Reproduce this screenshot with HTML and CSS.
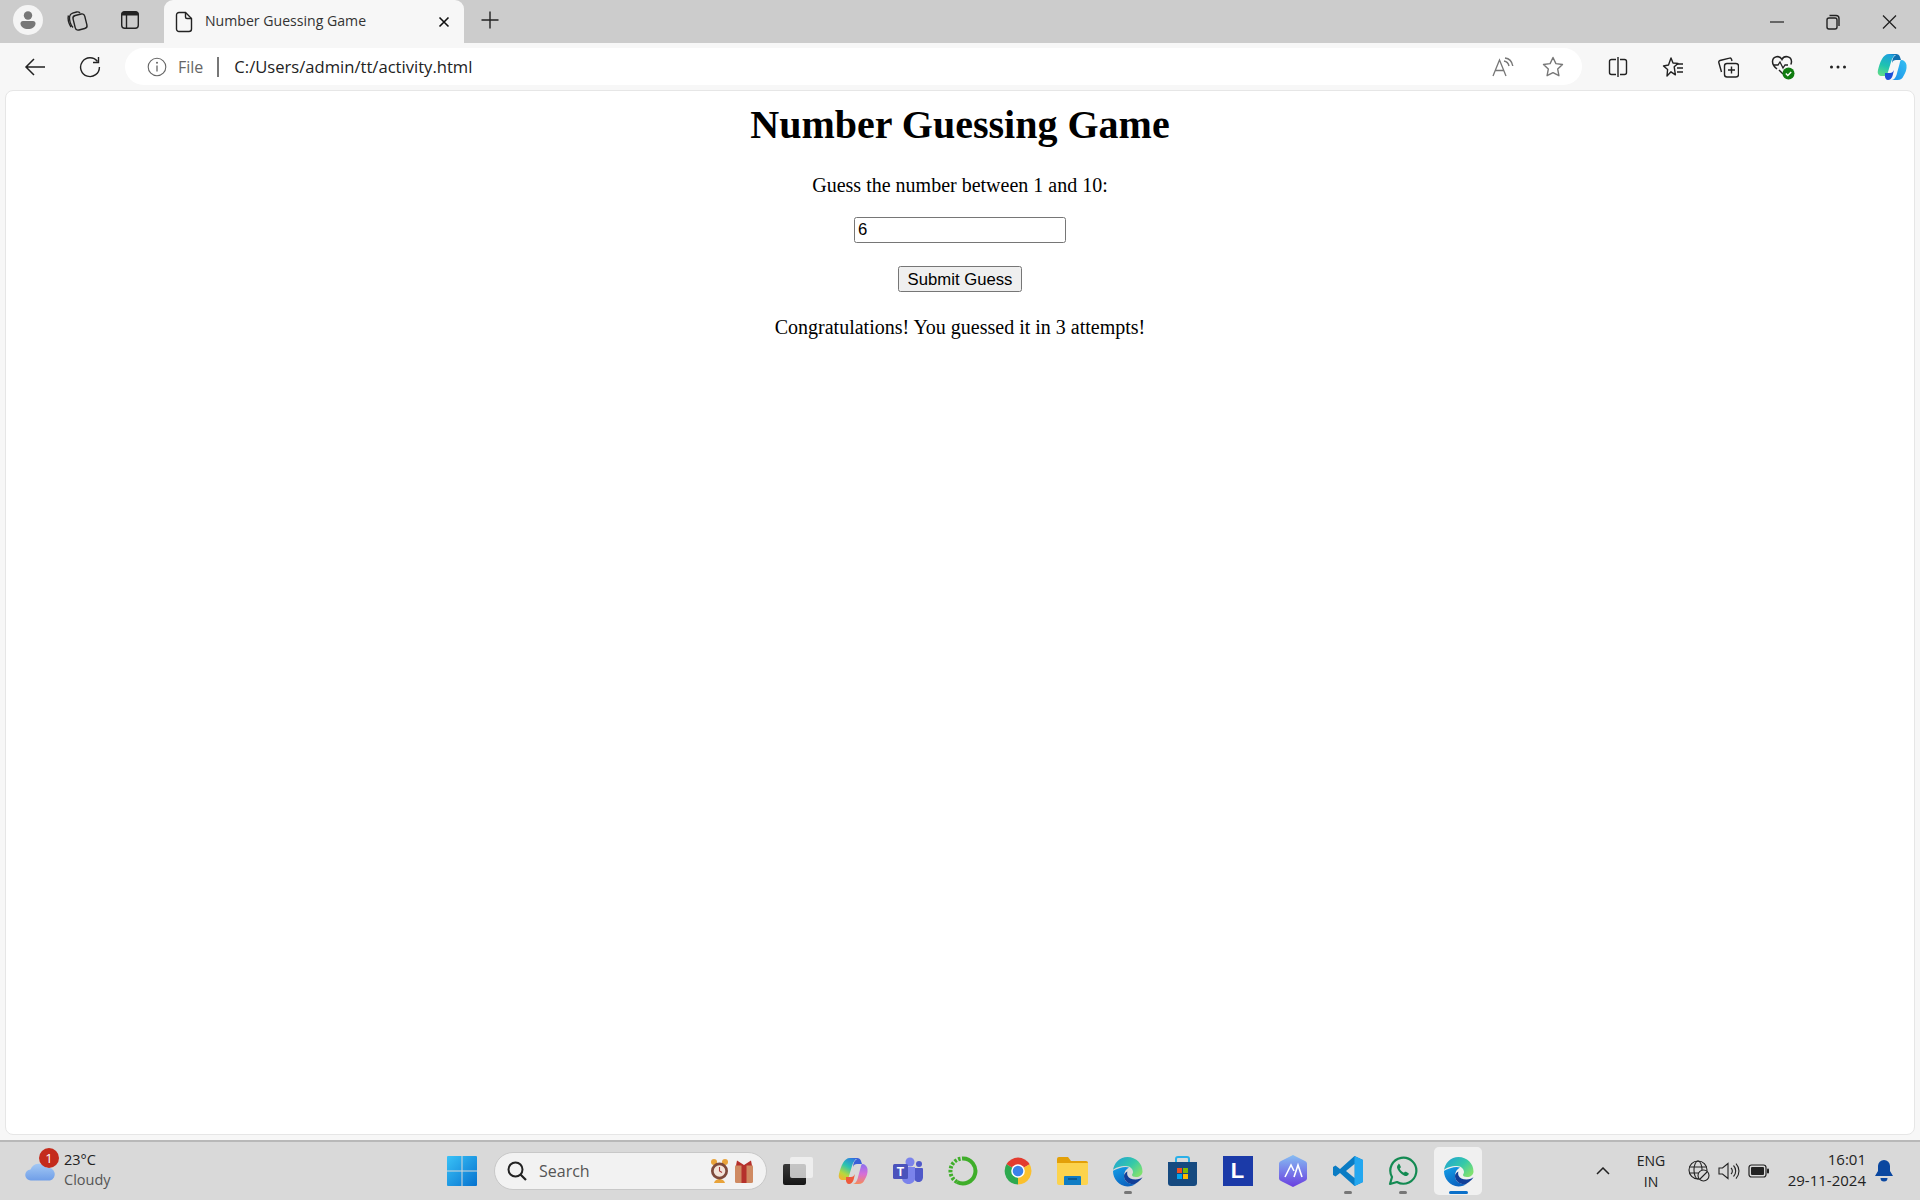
FILE: index.html
```html
<!DOCTYPE html>
<html lang="en">
<head>
    <meta charset="UTF-8">
    <title>Number Guessing Game</title>
    <link rel="stylesheet" href="styles.css">
</head>
<body>
    <div class="tabbar">
        <div class="avatar">
            <svg width="22" height="22" viewBox="0 0 22 22"><circle cx="11" cy="6.500" r="4.200" fill="#777"/><path d="M3.500 14.500a2.500 2.500 0 0 1 2.500-2.500h10a2.500 2.500 0 0 1 2.500 2.500c0 3.500-3.500 5.500-7.500 5.500s-7.500-2-7.500-5.500z" fill="#777"/></svg>
        </div>
        <div class="tab-btn collections-btn">
            <svg class="ic" width="24" height="24" viewBox="0 0 24 24"><rect x="9" y="6.500" width="12" height="15" rx="3" transform="rotate(-14 15 14)"/><path d="M8 19.500C5.500 17 4 12 4.600 8.500c.3-1.600 1.500-2.800 3-3.300l4-1.200c1.400-.4 2.600 0 3.400 1"/><path d="M6 19c-2-3-3.400-8-2.600-11.500"/></svg>
        </div>
        <div class="tab-btn vtabs-btn">
            <svg width="20" height="20" viewBox="0 0 20 20"><rect x="1.700" y="1.700" width="16.600" height="16.600" rx="3" fill="none" stroke="#222" stroke-width="1.400"/><path d="M2 5V4a2 2 0 0 1 2-2h12a2 2 0 0 1 2 2v1z" fill="#222" stroke="#222"/><path d="M6.500 5v13" stroke="#222" stroke-width="1.400"/></svg>
        </div>
        <div class="tab">
            <svg class="ic" width="18" height="22" viewBox="0 0 18 22"><path d="M4 1.500h6.500l6 6V18a2.500 2.500 0 0 1-2.500 2.500H4A2.500 2.500 0 0 1 1.500 18V4A2.500 2.500 0 0 1 4 1.500z"/><path d="M10.500 1.500V6a1.500 1.500 0 0 0 1.500 1.500h4.500"/></svg>
            <span class="tab-title">Number Guessing Game</span>
            <svg class="tab-close" width="12" height="12" viewBox="0 0 12 12"><path d="M1.500 1.500l9 9M10.500 1.500l-9 9" stroke="#111" stroke-width="1.600"/></svg>
        </div>
        <div class="tab-btn new-tab">
            <svg width="20" height="20" viewBox="0 0 20 20"><path d="M10 1.500v17M1.500 10h17" stroke="#222" stroke-width="1.400"/></svg>
        </div>
        <div class="win-controls">
            <svg width="57" height="22" viewBox="0 0 57 22"><path d="M22 11h14" stroke="#222" stroke-width="1.200"/></svg>
            <svg class="ic" width="57" height="22" viewBox="0 0 57 22"><rect x="22" y="7" width="10" height="11" rx="2"/><path d="M24.500 4.500h6.500a3 3 0 0 1 3 3v7.500"/></svg>
            <svg width="57" height="22" viewBox="0 0 57 22"><path d="M21 4.500l13 13M34 4.500l-13 13" stroke="#222" stroke-width="1.300"/></svg>
        </div>
    </div>

    <div class="toolbar">
        <div class="nav-btn back-btn">
            <svg width="22" height="20" viewBox="0 0 22 20"><path d="M21 10H2M10 2l-8 8 8 8" fill="none" stroke="#222" stroke-width="1.500"/></svg>
        </div>
        <div class="nav-btn reload-btn">
            <svg class="ic" width="22" height="22" viewBox="0 0 22 22"><path d="M18.500 5.500A9.400 9.400 0 1 0 20.400 11"/><path d="M19.500 1v5.500H14"/></svg>
        </div>
        <div class="address">
            <svg class="info" width="20" height="20" viewBox="0 0 20 20"><circle cx="10" cy="10" r="8.800" fill="none" stroke="#666" stroke-width="1.100"/><path d="M10 8.500v6" stroke="#666" stroke-width="1.300"/><circle cx="10" cy="5.800" r="1" fill="#666"/></svg>
            <span class="file-label">File</span>
            <span class="addr-divider"></span>
            <span class="url">C:/Users/admin/tt/activity.html</span>
            <svg class="read-aloud" width="22" height="20" viewBox="0 0 22 20"><path d="M1 19L7.500 3 14 19M3.500 13.500h8" fill="none" stroke="#777" stroke-width="1.300"/><path d="M12 4c2.500.5 4.500 2.500 5 5M13 1c4 .5 7 3.500 7.800 8" fill="none" stroke="#777" stroke-width="1.400"/></svg>
            <svg class="fav-star" width="22" height="21" viewBox="0 0 22 21"><path d="M11 1.500l2.900 6.100 6.600.9-4.800 4.600 1.200 6.600L11 16.600l-5.900 3.100 1.200-6.600L1.500 8.500l6.600-.9z" fill="none" stroke="#777" stroke-width="1.400" stroke-linejoin="round"/></svg>
        </div>
        <div class="tools">
            <div class="tool">
                <svg class="ic" width="20" height="20" viewBox="0 0 20 20"><path d="M8 2.500H3.500a2 2 0 0 0-2 2v11a2 2 0 0 0 2 2H8M12 2.500h4.500a2 2 0 0 1 2 2v11a2 2 0 0 1-2 2H12"/><path d="M10 0v20"/></svg>
            </div>
            <div class="tool">
                <svg class="ic" width="22" height="22" viewBox="0 0 22 22"><path d="M9 2l2 5 5 .4-3.800 3.400 1.200 8L9 15.800 5 20l.6-6.500L1.500 10l5-1z" stroke-linejoin="round"/><path d="M14 8h7M15 12h6M15 16h6"/></svg>
            </div>
            <div class="tool">
                <svg class="ic" width="22" height="22" viewBox="0 0 22 22"><rect x="7.500" y="7.500" width="14" height="13.500" rx="2.500"/><path d="M14.500 10.500v7M11 14h7"/><path d="M15 5l-.5-1.800c-.3-.8-1.200-1.300-2-1L3 4.500c-1 .3-1.500 1.200-1.200 2L4.500 16"/></svg>
            </div>
            <div class="tool health-tool">
                <svg width="24" height="26" viewBox="0 0 24 26"><path d="M6 15C3.500 13 1.500 10.500 1.500 7.500A5 5 0 0 1 11 5.500 5 5 0 0 1 20.500 7.500c0 1-.2 2-.7 3" fill="none" stroke="#222" stroke-width="1.500"/><path d="M3 11h4l2-3 3 6 2-3h3" fill="none" stroke="#222" stroke-width="1.300"/><path d="M8 16l4 4" stroke="#222" stroke-width="1.500"/><circle cx="17.500" cy="19.500" r="6" fill="#107c10"/><path d="M14.800 19.500l2 2 3.400-3.600" fill="none" stroke="#fff" stroke-width="1.400"/></svg>
            </div>
            <div class="tool">
                <svg width="18" height="4" viewBox="0 0 18 4"><circle cx="2.500" cy="2" r="1.500" fill="#222"/><circle cx="9" cy="2" r="1.500" fill="#222"/><circle cx="15.500" cy="2" r="1.500" fill="#222"/></svg>
            </div>
            <div class="tool copilot-tool">
                <svg width="32" height="28" viewBox="0 0 30 28">
                    <defs>
                        <linearGradient id="copA" x1="0.600" y1="0" x2="0.300" y2="1"><stop offset="0" stop-color="#1d9fe0"/><stop offset=".55" stop-color="#1fc3b0"/><stop offset="1" stop-color="#5edb8a"/></linearGradient>
                        <linearGradient id="copB" x1="0" y1="1" x2="1" y2="0"><stop offset="0" stop-color="#1c8fe8"/><stop offset="1" stop-color="#35c0f2"/></linearGradient>
                    </defs>
                    <path d="M12 1h8c-3 1-5 4-6 8l-3 10c-.5 2-1 3-2 4H5c-3 0-5-2-4-6 1-4 2-8 4-11 1.500-3 4-5 7-5z" fill="url(#copA)"/>
                    <path d="M12 1h7c2 0 3.500 1 4 3l1 3h-5c-2 0-3.500 1-4 3 .5-4 1-6 4-8z" fill="#0f6fb0"/>
                    <path d="M24 7c3 0 5 2 5.500 5 .5 4-1 8-3 11-1 2.500-3 4-6 4h-6c2 0 4-2 5-5l3-11c.4-1.500.6-3 1.500-4z" fill="url(#copB)"/>
                    <path d="M8 20h5c2 0 3-1 4-3l-1.500 6c-1 2.500-2.500 4-4.500 4-2 0-2.500-1.500-3-3z" fill="#1c4fd8"/>
                </svg>
            </div>
        </div>
    </div>

    <div class="page-wrap">
        <main class="page">
            <h1 class="title">Number Guessing Game</h1>
            <p class="prompt">Guess the number between 1 and 10:</p>
            <input class="guess-input" type="text" value="6">
            <button class="guess-btn">Submit Guess</button>
            <p class="result">Congratulations! You guessed it in 3 attempts!</p>
        </main>
    </div>

    <footer class="taskbar">
        <div class="weather">
            <div class="weather-icon">
                <svg width="31" height="20" viewBox="0 0 31 20"><defs><linearGradient id="cloud" x1="0" y1="0" x2="0" y2="1"><stop offset="0" stop-color="#a3c8f4"/><stop offset="1" stop-color="#6f9ee8"/></linearGradient></defs><path d="M6 19.500a5.500 5.500 0 0 1-.5-11A9 9 0 0 1 21.500 7 6.300 6.300 0 0 1 25 19.500z" fill="url(#cloud)"/></svg>
                <span class="badge">1</span>
            </div>
            <div class="weather-text">
                <span class="temp">23°C</span>
                <span class="cond">Cloudy</span>
            </div>
        </div>
        <div class="task-cell">
            <svg width="30" height="30" viewBox="0 0 30 30"><defs><linearGradient id="win" x1="0" y1="0" x2="1" y2="1"><stop offset="0" stop-color="#39c2f7"/><stop offset="1" stop-color="#0672cf"/></linearGradient></defs><path d="M1 0h13.500v14.500H0V1a1 1 0 0 1 1-1zM15.500 0H29a1 1 0 0 1 1 1v13.500H15.500zM0 15.500h14.500V30H1a1 1 0 0 1-1-1zM15.500 15.500H30V29a1 1 0 0 1-1 1H15.500z" fill="url(#win)"/></svg>
        </div>
        <div class="search">
            <svg width="22" height="22" viewBox="0 0 22 22"><circle cx="9.500" cy="9.500" r="7" fill="none" stroke="#222" stroke-width="2"/><path d="M14.500 14.500l5.500 5.500" stroke="#222" stroke-width="2.200"/></svg>
            <span class="search-text">Search</span>
            <svg class="search-art" width="46" height="28" viewBox="0 0 46 28">
                <circle cx="4" cy="5" r="3" fill="#e8a33a"/><circle cx="15" cy="5" r="3" fill="#e8a33a"/>
                <path d="M4 26c1-3 3-4 5.500-4s4.500 1 5.500 4z" fill="#e8a33a"/>
                <circle cx="9.500" cy="14" r="8.500" fill="#7e4a3c"/><circle cx="9.500" cy="14" r="5.800" fill="#f2e4da"/><path d="M9.500 10v4l2.500 1.500" fill="none" stroke="#a83a3a" stroke-width="1.100"/>
                <rect x="25" y="8" width="18" height="18" rx="1.500" fill="#cf8a62"/><rect x="31.500" y="8" width="5" height="18" fill="#b5312c"/><path d="M27 3.500l7 4.500 7-4.500 1 5H26z" fill="#b5312c"/>
            </svg>
        </div>
        <div class="task-cell">
            <svg width="30" height="30" viewBox="0 0 30 30"><defs><linearGradient id="tv" x1="0" y1="0" x2="0" y2="1"><stop offset="0" stop-color="#3a3a3a"/><stop offset="1" stop-color="#161616"/></linearGradient></defs><rect x="0" y="8" width="23" height="21" rx="2" fill="url(#tv)"/><rect x="7" y="1" width="23" height="21" rx="2" fill="#f4f4f4" fill-opacity=".75"/></svg>
        </div>
        <div class="task-cell">
            <svg width="30" height="28" viewBox="0 0 30 28">
                <defs>
                    <linearGradient id="cplA" x1="0.700" y1="0" x2="0.200" y2="1"><stop offset="0" stop-color="#2b7de0"/><stop offset=".4" stop-color="#2cc4b0"/><stop offset=".75" stop-color="#b8d83c"/><stop offset="1" stop-color="#f5b030"/></linearGradient>
                    <linearGradient id="cplB" x1="0.500" y1="0" x2="0.500" y2="1"><stop offset="0" stop-color="#8a6ff0"/><stop offset=".5" stop-color="#d66fd8"/><stop offset="1" stop-color="#f58a5a"/></linearGradient>
                </defs>
                <path d="M12 1h8c-3 1-5 4-6 8l-3 10c-.5 2-1 3-2 4H5c-3 0-5-2-4-6 1-4 2-8 4-11 1.500-3 4-5 7-5z" fill="url(#cplA)"/>
                <path d="M12 1h7c2 0 3.500 1 4 3l1 3h-5c-2 0-3.500 1-4 3 .5-4 1-6 4-8z" fill="#3a5fd8"/>
                <path d="M24 7c3 0 5 2 5.500 5 .5 4-1 8-3 11-1 2.500-3 4-6 4h-6c2 0 4-2 5-5l3-11c.4-1.500.6-3 1.500-4z" fill="url(#cplB)"/>
                <path d="M8 20h5c2 0 3-1 4-3l-1.500 6c-1 2.500-2.500 4-4.500 4-2 0-2.500-1.500-3-3z" fill="#ee5a3c"/>
            </svg>
        </div>
        <div class="task-cell">
            <svg width="30" height="28" viewBox="0 0 30 28"><circle cx="17" cy="5" r="4.500" fill="#7b83eb"/><circle cx="26" cy="7" r="3" fill="#5059c9"/><path d="M21 11h8a1 1 0 0 1 1 1v8c0 3-2 5-4.500 5S21 23 21 20z" fill="#5059c9"/><path d="M9 10h13v11c0 3.500-3 6-6.500 6S9 24.500 9 21z" fill="#7b83eb"/><rect x="0" y="7" width="15" height="15" rx="1.500" fill="#4b53bc"/><text class="teams-t" x="7.500" y="19">T</text></svg>
        </div>
        <div class="task-cell">
            <svg width="30" height="30" viewBox="0 0 30 30"><path d="M15 2.500a12.500 12.500 0 1 1-6 23.500" fill="none" stroke="#3fae2a" stroke-width="4"/><path d="M9 26A12.500 12.500 0 0 1 15 2.500" fill="none" stroke="#3fae2a" stroke-width="4" stroke-dasharray="2.500 1.500"/></svg>
        </div>
        <div class="task-cell">
            <svg width="30" height="30" viewBox="0 0 30 30"><path d="M15 15L3.400 8.300A13.500 13.500 0 0 1 26.700 8.300z" fill="#e33b2e"/><path d="M15 15L26.700 8.300A13.500 13.500 0 0 1 15 28.500z" fill="#fbc02d"/><path d="M15 15v13.500A13.500 13.500 0 0 1 3.400 8.300z" fill="#2da94f"/><circle cx="15" cy="15" r="6.800" fill="#fff"/><circle cx="15" cy="15" r="5.300" fill="#3b82e8"/></svg>
        </div>
        <div class="task-cell">
            <svg width="31" height="28" viewBox="0 0 31 28"><path d="M0 2a2 2 0 0 1 2-2h9l3 4h15a2 2 0 0 1 2 2v6H0z" fill="#e3a008"/><path d="M0 6h31v20a2 2 0 0 1-2 2H2a2 2 0 0 1-2-2z" fill="#fcd34d"/><path d="M8 19h15a1 1 0 0 1 1 1v8H7v-8a1 1 0 0 1 1-1z" fill="#0f7cc4"/><path d="M11 22h9" stroke="#0b4f80" stroke-width="1.500"/></svg>
        </div>
        <div class="task-cell pinned">
            <svg width="31" height="31" viewBox="0 0 31 31">
                <defs>
                    <linearGradient id="edgeTop" x1="0" y1="0" x2="1" y2="0.700"><stop offset="0" stop-color="#1f9fd8"/><stop offset=".6" stop-color="#35c9a8"/><stop offset="1" stop-color="#7fe070"/></linearGradient>
                    <linearGradient id="edgeBody" x1="0" y1="0" x2="0.500" y2="1"><stop offset="0" stop-color="#14a0e8"/><stop offset="1" stop-color="#0b63c0"/></linearGradient>
                </defs>
                <path d="M1 15C1.500 7 8 1 15.500 1 24 1 30.500 7.500 30.500 15.500c0 3.500-3 5.500-6.500 5.500-2.500 0-4-1-4-2 0-.8 1-1.200 1-3 0-3-3-6-7-6-6 0-11 2-13 4z" fill="url(#edgeTop)"/>
                <path d="M1 15c0 8 6 15 14.500 15.500 3.500 0 6-1 8-2.500-6 1-11.500-2.500-11.500-8 0-4 2-7 5-8.500-3-1-6-.5-9 .5-3 1-6 2-7 3z" fill="url(#edgeBody)"/>
                <path d="M12 20c0 5 5 9 11 8l3-2c2-1.500 3.500-3 4.500-5-1 1.500-4 2.500-7 2.500-4 0-7-1.500-8-4-.5-1.500-.5-3 0-4-2 1-3.500 2.500-3.500 4.500z" fill="#123f98"/>
            </svg>
        </div>
        <div class="task-cell">
            <svg width="29" height="32" viewBox="0 0 29 32"><path d="M8 8V4a2 2 0 0 1 2-2h9a2 2 0 0 1 2 2v4" fill="none" stroke="#2bb0e8" stroke-width="2"/><path d="M0 7h29v21a3 3 0 0 1-3 3H3a3 3 0 0 1-3-3z" fill="#164a80"/><rect x="9" y="13" width="5" height="5" fill="#f25022"/><rect x="15" y="13" width="5" height="5" fill="#7fba00"/><rect x="9" y="19" width="5" height="5" fill="#00a4ef"/><rect x="15" y="19" width="5" height="5" fill="#ffb900"/></svg>
        </div>
        <div class="task-cell">
            <div class="letter-tile">L</div>
        </div>
        <div class="task-cell">
            <svg width="28" height="32" viewBox="0 0 28 32"><defs><linearGradient id="hexa" x1="0" y1="0" x2="0" y2="1"><stop offset="0" stop-color="#86bdf2"/><stop offset="1" stop-color="#6a3fe0"/></linearGradient></defs><path d="M14 0l12 6a3 3 0 0 1 2 3v14a3 3 0 0 1-2 3l-12 6-12-6a3 3 0 0 1-2-3V9a3 3 0 0 1 2-3z" fill="url(#hexa)"/><path d="M6 22l6-12 3 6M15 22l4-12 4 12" fill="none" stroke="#fff" stroke-width="1.600"/></svg>
        </div>
        <div class="task-cell pinned">
            <svg width="30" height="30" viewBox="0 0 30 30"><path d="M21.500 0L30 4v22l-8.500 4L7 17l-4.500 3.500L0 19v-8l2.500-1.500L7 13z" fill="#0a7cc4"/><path d="M21.500 0L30 4v22l-8.500 4z" fill="#23a7f0"/><path d="M21.500 8l-8.500 7 8.500 7z" fill="#d9d9d9"/></svg>
        </div>
        <div class="task-cell pinned">
            <svg width="30" height="30" viewBox="0 0 30 30"><path d="M2 28l2-7A13 13 0 1 1 9 26z" fill="none" stroke="#138a52" stroke-width="2.200" stroke-linejoin="round"/><path d="M10.500 8.500c-1.500 1-2 2.500-1 4.500 1.500 3 3.500 5 6.500 6.500 2 1 3.500.5 4.500-1 .5-.8.3-1.300-.3-1.600l-2.200-1.100c-.6-.3-1-.2-1.400.3l-.6.7c-2-.8-3.500-2.300-4.300-4.300l.7-.6c.5-.4.6-.8.3-1.400l-1.100-2.200c-.3-.6-1-.8-1.600-.3z" fill="#138a52"/></svg>
        </div>
        <div class="task-cell active">
            <svg width="31" height="31" viewBox="0 0 31 31">
                <path d="M1 15C1.500 7 8 1 15.500 1 24 1 30.500 7.500 30.500 15.500c0 3.500-3 5.500-6.500 5.500-2.500 0-4-1-4-2 0-.8 1-1.200 1-3 0-3-3-6-7-6-6 0-11 2-13 4z" fill="url(#edgeTop)"/>
                <path d="M1 15c0 8 6 15 14.500 15.500 3.500 0 6-1 8-2.500-6 1-11.500-2.500-11.500-8 0-4 2-7 5-8.500-3-1-6-.5-9 .5-3 1-6 2-7 3z" fill="url(#edgeBody)"/>
                <path d="M12 20c0 5 5 9 11 8l3-2c2-1.500 3.500-3 4.500-5-1 1.500-4 2.500-7 2.500-4 0-7-1.500-8-4-.5-1.500-.5-3 0-4-2 1-3.500 2.500-3.500 4.500z" fill="#123f98"/>
            </svg>
        </div>
        <div class="tray">
            <svg class="tray-chevron" width="14" height="8" viewBox="0 0 14 8"><path d="M1 7l6-6 6 6" fill="none" stroke="#222" stroke-width="1.500"/></svg>
            <div class="lang"><span>ENG</span><span>IN</span></div>
            <svg class="tray-icon globe" width="22" height="22" viewBox="0 0 22 22"><g fill="none" stroke="#222" stroke-width="1.100"><circle cx="10" cy="10" r="9"/><ellipse cx="10" cy="10" rx="4" ry="9"/><path d="M1 7h18M1 13h18"/></g><circle cx="15.500" cy="15.500" r="5.500" fill="#d9d9d9" stroke="#222" stroke-width="1.100"/><path d="M12 19l7-7" stroke="#222" stroke-width="1.100"/></svg>
            <svg class="tray-icon" width="22" height="20" viewBox="0 0 22 20"><g fill="none" stroke="#222" stroke-width="1.100"><path d="M1 7v6h3.500L10 17.500v-15L4.500 7z"/><path d="M13 7a4 4 0 0 1 0 6M15.500 4.500a8 8 0 0 1 0 11M18 2.500a11 11 0 0 1 0 15"/></g></svg>
            <svg class="tray-icon" width="22" height="14" viewBox="0 0 22 14"><rect x="1" y="1" width="17" height="12" rx="2.500" fill="none" stroke="#222" stroke-width="1.200"/><rect x="3" y="3" width="13" height="8" rx="1" fill="#222"/><rect x="19" y="4.500" width="2" height="5" rx="1" fill="#222"/></svg>
            <div class="clock"><span>16:01</span><span>29-11-2024</span></div>
            <svg class="bell" width="18" height="22" viewBox="0 0 18 22"><path d="M9 0a6 6 0 0 1 6 6v5l3 5H0l3-5V6a6 6 0 0 1 6-6z" fill="#0a47a0"/><path d="M5.500 18h7a3.500 3.500 0 0 1-7 0z" fill="#0a47a0"/></svg>
        </div>
    </footer>
</body>
</html>
```

FILE: styles.css
```css
* {
    box-sizing: border-box;
}
body {
    margin: 0;
    height: 1200px;
    display: flex;
    flex-direction: column;
    background-color: #f7f7f7;
    font-family: "Open Sans", "Noto Sans", sans-serif;
    color: #111;
    overflow: hidden;
}
.ic {
    fill: none;
    stroke: #222;
    stroke-width: 1.4;
}

/* tab strip */
.tabbar {
    height: 43px;
    display: flex;
    align-items: center;
    background-color: #cccccc;
    flex-shrink: 0;
}
.avatar {
    width: 30px;
    height: 30px;
    margin-left: 13px;
    margin-top: -3px;
    border-radius: 50%;
    background-color: #f4f4f4;
    display: flex;
    align-items: center;
    justify-content: center;
}
.tab-btn {
    display: flex;
    align-items: center;
    justify-content: center;
    margin-top: -4px;
}
.collections-btn {
    margin-left: 22px;
    width: 24px;
}
.vtabs-btn {
    margin-left: 31px;
    width: 20px;
}
.tab {
    width: 300px;
    height: 43px;
    margin-left: 24px;
    padding-left: 11px;
    display: flex;
    align-items: center;
    background-color: #f7f7f7;
    border-radius: 9px 9px 0 0;
}
.tab-title {
    margin-left: 12px;
    margin-top: -2px;
    font-size: 14.1px;
    color: #333;
    white-space: nowrap;
    flex: 1;
}
.tab-close {
    margin-right: 14px;
}
.new-tab {
    margin-left: 16px;
    width: 20px;
}
.win-controls {
    margin-left: auto;
    margin-right: 1px;
    display: flex;
}

/* address bar row */
.toolbar {
    height: 47px;
    display: flex;
    align-items: center;
    flex-shrink: 0;
}
.nav-btn {
    display: flex;
    justify-content: center;
    width: 22px;
}
.back-btn {
    margin-left: 24px;
}
.reload-btn {
    margin-left: 33px;
}
.address {
    width: 1460px;
    height: 37px;
    margin-left: 24px;
    padding-left: 22px;
    display: flex;
    align-items: center;
    background-color: #fff;
    border-radius: 19px;
}
.file-label {
    margin-left: 11px;
    font-size: 16px;
    color: #666;
}
.addr-divider {
    width: 2px;
    height: 20px;
    margin-left: 14px;
    background-color: #777;
}
.url {
    margin-left: 15px;
    font-size: 16.6px;
    color: #222;
    flex: 1;
}
.read-aloud {
    margin-right: 28px;
}
.fav-star {
    margin-right: 18px;
}
.tools {
    display: grid;
    grid-template-columns: repeat(6, 55px);
    margin-left: 8px;
}
.tool {
    display: flex;
    align-items: center;
    justify-content: center;
}
.health-tool {
    margin-left: 1px;
}
.copilot-tool {
    margin-left: -2px;
}

/* page content */
.page-wrap {
    flex: 1;
    padding: 0 5px 5px;
    min-height: 0;
}
.page {
    height: 100%;
    display: flex;
    flex-direction: column;
    align-items: center;
    background-color: #fff;
    border: 1px solid #e6e6e6;
    border-radius: 8px;
    color: #000;
    font-family: "Liberation Serif", serif;
}
.title {
    margin: 11px 0 0;
    font-size: 40px;
    line-height: 46px;
    font-weight: bold;
}
.prompt {
    margin: 26px 0 0;
    font-size: 20px;
    line-height: 23px;
}
.guess-input {
    width: 212px;
    height: 26px;
    margin-top: 20px;
    padding: 1px 3px;
    border: 1px solid #767676;
    border-radius: 2.5px;
    font-family: "Liberation Sans", sans-serif;
    font-size: 16.7px;
    color: #000;
    background-color: #fff;
}
.guess-btn {
    width: 124px;
    height: 26px;
    margin-top: 23px;
    padding: 1px 0 0;
    border: 1px solid #767676;
    border-radius: 2.5px;
    background-color: #efefef;
    font-family: "Liberation Sans", sans-serif;
    font-size: 16.7px;
    color: #000;
}
.result {
    margin: 24px 0 0;
    font-size: 20px;
    line-height: 23px;
}

/* windows taskbar */
.taskbar {
    height: 60px;
    display: flex;
    align-items: center;
    flex-shrink: 0;
    background-color: #d9d9d9;
    border-top: 2px solid #b8b8b8;
}
.weather {
    width: 434px;
    display: flex;
    align-items: center;
    padding-left: 25px;
}
.weather-icon {
    position: relative;
    width: 31px;
    height: 20px;
}
.badge {
    position: absolute;
    top: -13px;
    left: 14px;
    width: 20px;
    height: 20px;
    border-radius: 50%;
    background-color: #c42b1c;
    color: #fff;
    font-size: 13px;
    line-height: 20px;
    text-align: center;
}
.weather-text {
    margin-left: 8px;
    margin-top: -2px;
    display: flex;
    flex-direction: column;
    font-size: 14.5px;
    line-height: 20px;
}
.temp {
    color: #222;
}
.cond {
    color: #555;
}
.task-cell {
    position: relative;
    width: 55px;
    height: 48px;
    display: flex;
    align-items: center;
    justify-content: center;
}
.task-cell.pinned::after,
.task-cell.active::after {
    content: "";
    position: absolute;
    bottom: 1px;
    left: 50%;
    width: 8px;
    height: 3px;
    margin-left: -4px;
    border-radius: 2px;
    background-color: #777;
}
.task-cell.active {
    width: 48px;
    margin-left: 4px;
    background-color: #f0f0f0;
    border-radius: 5px;
}
.task-cell.active::after {
    width: 19px;
    margin-left: -9px;
    background-color: #0a6fc9;
}
.search {
    width: 273px;
    height: 38px;
    margin-left: 5px;
    margin-right: 3px;
    padding-left: 11px;
    padding-right: 10px;
    display: flex;
    align-items: center;
    background-color: #f2f2f2;
    border: 1px solid #c8c8c8;
    border-radius: 19px;
}
.search-text {
    margin-left: 11px;
    font-size: 16px;
    color: #555;
    flex: 1;
}
.letter-tile {
    width: 30px;
    height: 30px;
    background-color: #1b3aa8;
    color: #fff;
    font-family: "Liberation Sans", sans-serif;
    font-size: 22px;
    font-weight: bold;
    line-height: 30px;
    text-align: center;
}
.teams-t {
    fill: #fff;
    font-family: "Liberation Sans", sans-serif;
    font-size: 12px;
    font-weight: bold;
    text-anchor: middle;
}
.tray {
    flex: 1;
    display: flex;
    align-items: center;
}
.tray-chevron {
    margin-left: 114px;
}
.lang {
    width: 50px;
    margin-left: 16px;
    display: flex;
    flex-direction: column;
    align-items: center;
    font-size: 14px;
    line-height: 21px;
    color: #222;
}
.tray-icon {
    margin-left: 8px;
}
.tray-icon.globe {
    margin-left: 12px;
}
.clock {
    width: 96px;
    margin-top: -2px;
    display: flex;
    flex-direction: column;
    align-items: flex-end;
    font-size: 15px;
    line-height: 21px;
    color: #222;
}
.bell {
    margin-left: 9px;
}
```
